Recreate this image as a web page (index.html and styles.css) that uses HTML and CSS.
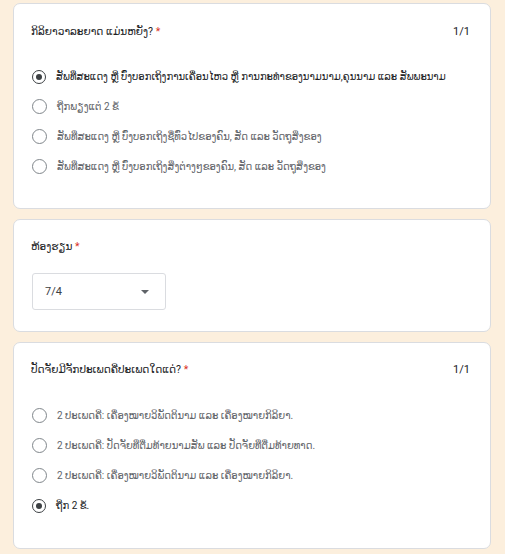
FILE: index.html
```html
<!DOCTYPE html>
<html lang="lo">
<head>
<meta charset="utf-8">
<link rel="stylesheet" href="styles.css">
</head>
<body>
<div class="page">
  <section class="card q1">
    <div class="head">
      <div class="title">ກິລິຍາວາລະຍາດ ແມ່ນຫຍັງ? <span class="req">*</span></div>
      <div class="score">1/1</div>
    </div>
    <div class="options">
      <div class="opt sel"><span class="radio on"></span><span class="label">ສັພທີ່ສະແດງ ຫຼື ບົ່ງບອກເຖິງການເຄື່ອນໄຫວ ຫຼື ການກະທຳຂອງນາມນາມ,ຄຸນນາມ ແລະ ສັພພະນາມ</span></div>
      <div class="opt"><span class="radio"></span><span class="label">ຖືກພຽງແຕ່ 2 ຂໍ້</span></div>
      <div class="opt"><span class="radio"></span><span class="label">ສັພທີ່ສະແດງ ຫຼື ບົ່ງບອກເຖິງຊື່ທົ່ວໄປຂອງຄົນ, ສັດ ແລະ ວັດຖຸສິ່ງຂອງ</span></div>
      <div class="opt"><span class="radio"></span><span class="label">ສັພທີ່ສະແດງ ຫຼື ບົ່ງບອກເຖິງສິ່ງຕ່າງໆຂອງຄົນ, ສັດ ແລະ ວັດຖຸສິ່ງຂອງ</span></div>
    </div>
  </section>

  <section class="card q2">
    <div class="head">
      <div class="title">ຫ້ອງຮຽນ <span class="req">*</span></div>
    </div>
    <div class="select">
      <span class="value">7/4</span>
      <svg class="caret" width="8" height="4" viewBox="0 0 8 4"><path d="M0 0 L8 0 L4 4 Z" fill="#5f6368"/></svg>
    </div>
  </section>

  <section class="card q3">
    <div class="head">
      <div class="title">ປັດຈັຍມີຈັກປະເພດຄືປະເພດໃດແດ່? <span class="req">*</span></div>
      <div class="score">1/1</div>
    </div>
    <div class="options">
      <div class="opt"><span class="radio"></span><span class="label">2 ປະເພດຄື: ເຄື່ອງໝາຍວິພັດຕິນາມ ແລະ ເຄື່ອງໝາຍກິລິຍາ.</span></div>
      <div class="opt"><span class="radio"></span><span class="label">2 ປະເພດຄື: ປັດຈັຍທີ່ຕື່ມທ້າຍນາມສັພ ແລະ ປັດຈັຍທີ່ຕື່ມທ້າຍທາດ.</span></div>
      <div class="opt"><span class="radio"></span><span class="label">2 ປະເພດຄື: ເຄື່ອງໝາຍວິພັດຕິນາມ ແລະ ເຄື່ອງໝາຍກິລິຍາ.</span></div>
      <div class="opt sel"><span class="radio on"></span><span class="label">ຖືກ 2 ຂໍ້.</span></div>
    </div>
  </section>
</div>
</body>
</html>
```

FILE: styles.css
```css
html, body {
  margin: 0;
  padding: 0;
  background: #fcefdd;
}
body {
  font-family: Roboto, "DejaVu Sans", sans-serif;
  font-size: 11px;
  color: #202124;
}
.page {
  padding: 3px 14px 0 13px;
  display: flex;
  flex-direction: column;
  gap: 10px;
}
.card {
  background: #fff;
  border: 1px solid #dadce0;
  border-radius: 7px;
  padding: 0 20px 0 17px;
  box-sizing: border-box;
}
.q1 { height: 206px; padding-top: 20px; }
.q2 { height: 113px; padding-top: 19px; }
.q3 { height: 207px; padding-top: 19px; }
.head {
  display: flex;
  justify-content: space-between;
  align-items: center;
  height: 14px;
}
.title {
  font-size: 10.5px;
  color: #202124;
}
.req { color: #d93025; }
.score {
  font-size: 11px;
  color: #202124;
}
.options {
  display: flex;
  flex-direction: column;
  gap: 15px;
  margin-top: 31px;
  padding-left: 1px;
}
.q3 .options { margin-top: 32px; }
.opt {
  display: flex;
  align-items: center;
  gap: 10px;
  height: 15px;
}
.radio {
  width: 13px;
  height: 13px;
  border: 1px solid #80868b;
  border-radius: 50%;
  flex: none;
  box-sizing: content-box;
  position: relative;
}
.radio.on {
  border: 1.5px solid #3c4043;
  width: 12px;
  height: 12px;
}
.radio.on::after {
  content: "";
  position: absolute;
  left: 3px;
  top: 3px;
  width: 6px;
  height: 6px;
  border-radius: 50%;
  background: #3c4043;
}
.label {
  font-size: 10px;
  color: #5f6368;
  white-space: nowrap;
}
.sel .label { color: #202124; }
.select {
  margin-top: 20px;
  margin-left: 1px;
  width: 134px;
  height: 37px;
  border: 1px solid #dadce0;
  border-radius: 3px;
  box-sizing: border-box;
  display: flex;
  align-items: center;
  justify-content: space-between;
  padding: 0 16px 0 12px;
}
.value {
  font-size: 11px;
  color: #3c4043;
}
.caret { display: block; }
```
